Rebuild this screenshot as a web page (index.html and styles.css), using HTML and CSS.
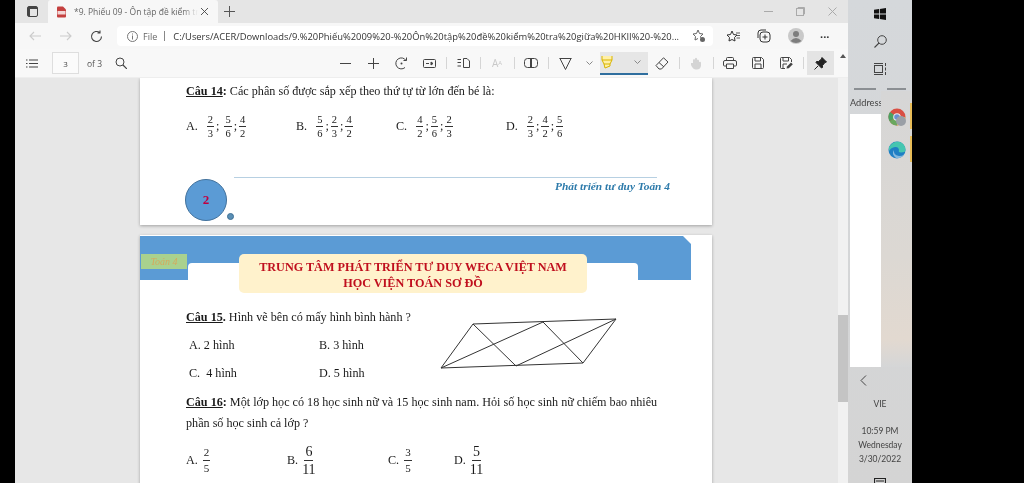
FILE: index.html
```html
<!DOCTYPE html>
<html lang="vi">
<head>
<meta charset="utf-8">
<title>PDF</title>
<link rel="stylesheet" href="styles.css">
</head>
<body>
<div class="screen">
  <div class="gutter"></div>
  <main class="browser">
    <div class="tabstrip">
      <svg class="ic win-ic" width="11" height="11" viewBox="0 0 11 11"><rect x=".5" y=".5" width="10" height="10" rx="1.5" fill="none" stroke="#444"/><rect x="1" y="1" width="9" height="2" fill="#444"/><rect x="1" y="3" width="2" height="7" fill="#444"/></svg>
      <div class="tab">
        <svg width="11" height="12" viewBox="0 0 11 12"><path d="M1 1.5Q1 .5 2 .5H7L10 3.5V10.500Q10 11.500 9 11.500H2Q1 11.500 1 10.500Z" fill="#c4403f"/><rect x="1.500" y="5" width="8" height="3.500" fill="#f3d6d6"/></svg>
        <span class="tab-title">*9. Phiếu 09 - Ôn tập đề kiểm tr</span>
        <svg width="9" height="9" viewBox="0 0 9 9"><path d="M1 1L8 8M8 1L1 8" stroke="#444" stroke-width=".9"/></svg>
      </div>
      <svg class="plus" width="11" height="11" viewBox="0 0 11 11"><path d="M5.500 0V11M0 5.500H11" stroke="#555" stroke-width="1"/></svg>
      <div class="winctl">
        <svg width="9" height="9" viewBox="0 0 9 9"><path d="M0 4.500H9" stroke="#aaa"/></svg>
        <svg width="9" height="9" viewBox="0 0 9 9"><rect x=".5" y="1.500" width="7" height="7" fill="none" stroke="#aaa"/><path d="M2 1V.5H8.500V7H8" fill="none" stroke="#aaa"/></svg>
        <svg width="9" height="9" viewBox="0 0 9 9"><path d="M.5 .5L8.500 8.500M8.500 .5L.5 8.500" stroke="#aaa"/></svg>
      </div>
    </div>

    <div class="addressrow">
      <svg class="nav-back" width="12" height="10" viewBox="0 0 12 10"><path d="M12 5H1M5 1L1 5L5 9" fill="none" stroke="#ccc" stroke-width="1.100"/></svg>
      <svg class="nav-fwd" width="12" height="10" viewBox="0 0 12 10"><path d="M0 5H11M7 1L11 5L7 9" fill="none" stroke="#ccc" stroke-width="1.100"/></svg>
      <svg class="nav-reload" width="13" height="13" viewBox="0 0 13 13"><path d="M11.500 6.500A5 5 0 1 1 9.800 2.700M10 .5V3H7.500" fill="none" stroke="#444" stroke-width="1.100"/></svg>
      <div class="omnibox">
        <svg width="11" height="11" viewBox="0 0 11 11"><circle cx="5.500" cy="5.500" r="5" fill="none" stroke="#777"/><path d="M5.500 4.500V8.500M5.500 2.500V3.500" stroke="#777"/></svg>
        <span class="scheme">File</span>
        <span class="sep-bar"></span>
        <span class="url">C:/Users/ACER/Downloads/9.%20Phiếu%2009%20-%20Ôn%20tập%20đề%20kiểm%20tra%20giữa%20HKII%20-%20...</span>
        <svg class="fav" width="14" height="14" viewBox="0 0 14 14"><path d="M6 1L7.500 4.500L11 5L8.500 7.500L9 9M6 1L4.500 4.500L1 5L3.500 7.500L3 11L6 9.500" fill="none" stroke="#666"/><circle cx="10.500" cy="10.500" r="2.500" fill="#666"/></svg>
      </div>
      <div class="browser-tools">
        <svg width="14" height="13" viewBox="0 0 14 13"><path d="M6 1L7.500 4.500L11 5L8.500 7.500L9 11L6 9.500L3 11L3.500 7.500L1 5L4.500 4.500Z" fill="none" stroke="#333"/><path d="M10 3H14M11 5.500H14M10.500 8H14" stroke="#333" stroke-width=".8"/></svg>
        <svg width="14" height="14" viewBox="0 0 14 14"><rect x="3" y="3" width="10" height="10" rx="3" fill="none" stroke="#333"/><path d="M1 9V4Q1 1 4 1H9M8 5.500V10.500M5.500 8H10.500" fill="none" stroke="#333"/></svg>
        <svg width="16" height="16" viewBox="0 0 16 16"><circle cx="8" cy="8" r="8" fill="#c9c9c9"/><circle cx="8" cy="6" r="3" fill="#7d7d7d"/><path d="M2.500 13Q8 7 13.500 13Q8 17 2.500 13Z" fill="#7d7d7d"/></svg>
        <span class="dots">···</span>
      </div>
    </div>

    <div class="pdfbar">
      <svg class="list-ic" width="12" height="9" viewBox="0 0 12 9"><path d="M3 1H12M3 4.500H12M3 8H12M0 1H1.500M0 4.500H1.500M0 8H1.500" stroke="#444"/></svg>
      <div class="pagebox">3</div>
      <span class="pageof">of 3</span>
      <svg class="find" width="12" height="12" viewBox="0 0 12 12"><circle cx="5" cy="5" r="4" fill="none" stroke="#444"/><path d="M8 8L12 12" stroke="#444" stroke-width="1.200"/></svg>
      <div class="tools">
        <span class="cell"><svg width="11" height="11" viewBox="0 0 11 11"><path d="M0 5.500H11" stroke="#444"/></svg></span>
        <span class="cell"><svg width="11" height="11" viewBox="0 0 11 11"><path d="M0 5.500H11M5.500 0V11" stroke="#444"/></svg></span>
        <span class="cell"><svg width="13" height="13" viewBox="0 0 13 13"><path d="M11 3.500A5.500 5.500 0 1 0 10 10.500M11.500 .5V3.500H8.500" fill="none" stroke="#444"/><circle cx="6.500" cy="6.500" r="1" fill="#444"/></svg></span>
        <span class="cell"><svg width="13" height="9" viewBox="0 0 13 9"><rect x=".5" y=".5" width="12" height="8" rx="1" fill="none" stroke="#444"/><path d="M3 4.500H6M8 3V6L10 4.500Z" stroke="#444" fill="#444"/></svg></span>
        <span class="divider"></span>
        <span class="cell"><svg width="13" height="10" viewBox="0 0 13 10"><path d="M.5 1.500H4M.5 4.500H4M.5 8H4M6.500 .5H10L12.500 3V9.500H6.500Z" fill="none" stroke="#444"/></svg></span>
        <span class="divider"></span>
        <span class="cell faded">A<sup>A</sup></span>
        <span class="divider"></span>
        <span class="cell"><svg width="14" height="10" viewBox="0 0 14 10"><rect x=".5" y=".5" width="13" height="9" rx="3" fill="none" stroke="#444"/><path d="M7 .5V9.500" stroke="#444" stroke-width="2"/></svg></span>
        <span class="divider"></span>
        <span class="cell"><svg width="13" height="13" viewBox="0 0 13 13"><path d="M.5 1.500H12.500M1 1.500L6.500 12.500L12 1.500" fill="none" stroke="#444"/></svg></span>
        <span class="cell chev"><svg width="7" height="4" viewBox="0 0 7 4"><path d="M.5 .5L3.500 3.500L6.500 .5" fill="none" stroke="#888"/></svg></span>
        <span class="hl">
          <svg width="14" height="14" viewBox="0 0 14 14"><path d="M2 1V5H12V1M2 5L4 9H10L12 5M4 9L5 13L10 11V9" fill="#fff0a8" stroke="#d8b400"/></svg>
          <svg width="7" height="4" viewBox="0 0 7 4"><path d="M.5 .5L3.500 3.500L6.500 .5" fill="none" stroke="#888"/></svg>
        </span>
        <span class="cell"><svg width="14" height="13" viewBox="0 0 14 13"><path d="M8.500 .8L13 5L6.500 12H4L1 8.500ZM4 5.500L9 10" fill="none" stroke="#444"/></svg></span>
        <span class="divider"></span>
        <span class="cell"><svg width="12" height="13" viewBox="0 0 12 13"><path d="M3 6V3Q4 1 5 3V1.500Q6 0 7 1.500V3Q8 2 9 3.500V5Q11 4 11 6V9Q10 13 6 12.500Q3 12.500 1 8V6Z" fill="#d4d4d4"/></svg></span>
        <span class="divider"></span>
        <span class="cell"><svg width="14" height="12" viewBox="0 0 14 12"><path d="M3.500 3.500V1.500Q3.500 .5 4.500 .5H9.500Q10.500 .5 10.500 1.500V3.500M3 9H1.500Q.5 9 .5 8V5Q.5 3.500 2 3.500H12Q13.500 3.500 13.500 5V8Q13.500 9 12.500 9H11M3.500 7H10.500V11.500H3.500Z" fill="none" stroke="#444"/></svg></span>
        <span class="cell"><svg width="12" height="12" viewBox="0 0 12 12"><path d="M.5 1.500Q.5 .5 1.500 .5H9.500L11.500 2.500V10.500Q11.500 11.500 10.500 11.500H1.500Q.5 11.500 .5 10.500ZM3 .5V4H8.500V.5M3 11.500V7H9V11.500" fill="none" stroke="#444"/></svg></span>
        <span class="cell"><svg width="13" height="12" viewBox="0 0 13 12"><path d="M.5 1.500Q.5 .5 1.500 .5H9.500L11.500 2.500V5M5 11.500H1.500Q.5 11.500 .5 10.500V1.500M3 .5V4H8.500V.5M3 11V7H7" fill="none" stroke="#444"/><path d="M6.500 11.500L7 9.500L11 5.500L12.800 7.300L8.800 11.300Z" fill="#444"/></svg></span>
        <span class="divider"></span>
        <span class="pin"><svg width="13" height="13" viewBox="0 0 13 13"><path d="M8 .5L12.500 5L11 5.500L8.500 8.500L8.500 10.500L7.500 11L2 5.500L2.500 4.500L4.500 4.500L7.500 2Z M4 9L.5 12.500" fill="#222" stroke="#222"/></svg></span>
      </div>
      <svg class="up-arrow" width="6" height="4" viewBox="0 0 6 4"><path d="M3 0L6 4H0Z" fill="#555"/></svg>
    </div>

    <div class="viewer">
      <div class="doc">
        <section class="page page-one">
          <p class="q"><b class="lead">Câu 14</b><b>:</b> Các phân số được sắp xếp theo thứ tự từ lớn đến bé là:</p>
          <div class="fracrow">
            <div class="opt opt-a">A.<span class="frac first"><i>2</i><i>3</i></span>;<span class="frac wide"><i>5</i><i>6</i></span>;<span class="frac"><i>4</i><i>2</i></span></div>
            <div class="opt opt-b">B.<span class="frac first"><i>5</i><i>6</i></span>;<span class="frac"><i>2</i><i>3</i></span>;<span class="frac"><i>4</i><i>2</i></span></div>
            <div class="opt opt-c">C.<span class="frac first"><i>4</i><i>2</i></span>;<span class="frac"><i>5</i><i>6</i></span>;<span class="frac"><i>2</i><i>3</i></span></div>
            <div class="opt">D.<span class="frac first"><i>2</i><i>3</i></span>;<span class="frac"><i>4</i><i>2</i></span>;<span class="frac"><i>5</i><i>6</i></span></div>
          </div>
          <footer class="pfoot">
            <div class="pnum">2</div>
            <div class="pdot"></div>
            <div class="pline">
              <div class="rule"></div>
              <div class="slogan">Phát triển tư duy Toán 4</div>
            </div>
          </footer>
        </section>

        <section class="page page-two">
          <div class="banner">
            <div class="toan">Toán 4</div>
            <div class="notch"></div>
            <div class="title">TRUNG TÂM PHÁT TRIỂN TƯ DUY WECA VIỆT NAM<br>HỌC VIỆN TOÁN SƠ ĐỒ</div>
          </div>
          <div class="q15">
            <div class="q15-text">
              <p class="q"><b class="lead">Câu 15</b><b>.</b> Hình vẽ bên có mấy hình bình hành ?</p>
              <div class="ans2"><span>A. 2 hình</span><span>B. 3 hình</span><span>C.&nbsp; 4 hình</span><span>D. 5 hình</span></div>
            </div>
            <svg class="para" width="180" height="52" viewBox="0 0 180 52"><path d="M33 6L176 1L143 45L1 50ZM33 6L76 48M103 4L143 45M1 50L103 4M76 48L176 1" fill="none" stroke="#333" stroke-width="1"/></svg>
          </div>
          <p class="q q16"><b class="lead">Câu 16</b><b>:</b> Một lớp học có 18 học sinh nữ và 15 học sinh nam. Hỏi số học sinh nữ chiếm bao nhiêu phần số học sinh cả lớp ?</p>
          <div class="fracrow r16">
            <div class="o16 o16-a">A.<span class="frac"><i>2</i><i>5</i></span></div>
            <div class="o16 o16-b">B.<span class="frac big"><i>6</i><i>11</i></span></div>
            <div class="o16 o16-c">C.<span class="frac"><i>3</i><i>5</i></span></div>
            <div class="o16">D.<span class="frac big"><i>5</i><i>11</i></span></div>
          </div>
        </section>
      </div>
      <div class="scrollbar"><div class="thumb"></div></div>
    </div>
  </main>

  <aside class="taskbar">
    <div class="tb-top">
      <svg width="12" height="12" viewBox="0 0 12 12"><path d="M0 1.800L5 1V5.600H0ZM5.800 .9L12 0V5.600H5.800ZM0 6.400H5V11L0 10.200ZM5.800 6.400H12V12L5.800 11.100Z" fill="#111"/></svg>
      <svg width="13" height="13" viewBox="0 0 13 13"><circle cx="8" cy="5" r="4.300" fill="none" stroke="#444"/><path d="M5 8L.5 12.500" stroke="#444" stroke-width="1.100"/></svg>
      <svg width="13" height="12" viewBox="0 0 13 12"><rect x=".5" y="2.500" width="8" height="7" fill="none" stroke="#444"/><path d="M0 .5H9M0 11.500H9M11.500 0V3M11.500 4.500V7.500M11.500 9V12" stroke="#444"/></svg>
    </div>
    <div class="grips"><span class="g1"></span><span class="g2"></span></div>
    <div class="tb-mid">
      <div class="addrcol">
        <div class="addrlabel">Address</div>
        <div class="addrinput"></div>
      </div>
      <div class="apps">
        <div class="app">
          <svg width="18" height="18" viewBox="0 0 18 18"><circle cx="9" cy="9" r="8.500" fill="#d94f43"/><path d="M9 9L1.600 13.200A8.500 8.500 0 0 1 2 4Z" fill="#4ba261"/><path d="M9 9L9 17.500A8.500 8.500 0 0 1 1.600 13.200Z" fill="#6aa85f"/><path d="M9 9H17.500A8.500 8.500 0 0 1 9 17.500Z" fill="#e1c45a"/><circle cx="9" cy="9" r="3.800" fill="#eee"/><circle cx="9" cy="9" r="2.800" fill="#6a8fd1"/><circle cx="13" cy="13" r="5" fill="#9a9fa6"/></svg>
        </div>
        <div class="app">
          <svg width="18" height="18" viewBox="0 0 18 18"><circle cx="9" cy="9" r="8.500" fill="#1f7fc4"/><path d="M1 6Q5 0 11 .8Q17 2 17.500 9Q17.500 11.500 13 11.500Q10 11.500 11 9Q10.500 5.500 7 6Q3 6.500 1 10Z" fill="#46c6b0"/><path d="M8 17Q3 13 6 9Q5 14 11 15Q14 15 16 13.500Q12.500 18 8 17Z" fill="#fff" opacity=".45"/></svg>
        </div>
      </div>
    </div>
    <svg class="caret" width="7" height="11" viewBox="0 0 7 11"><path d="M6 .5L1 5.500L6 10.500" fill="none" stroke="#444"/></svg>
    <div class="lang">VIE</div>
    <div class="clock">10:59 PM<br>Wednesday<br>3/30/2022</div>
    <svg class="notif" width="12" height="10" viewBox="0 0 12 10"><path d="M.5 .5H11.500V10H.5ZM2 3H10M2 5.500H10" fill="none" stroke="#222" stroke-width="1.200"/></svg>
  </aside>
</div>
</body>
</html>
```

FILE: styles.css
```css
* { box-sizing: border-box; }
html, body { margin: 0; height: 100%; background: #000; overflow: hidden; }
.screen { display: flex; width: 912px; height: 483px; overflow: hidden; }
.gutter { width: 15px; flex: none; }

.browser { width: 833px; flex: none; display: flex; flex-direction: column; font-family: "Open Sans", "Noto Sans", sans-serif; color: #444; background: #e7e7e7; filter: blur(.35px); }
.tabstrip { height: 23px; flex: none; display: flex; align-items: center; background: #e5e5e5; }
.win-ic { margin-left: 12px; }
.tab { margin-left: 10px; width: 170px; height: 23px; background: #f7f7f7; display: flex; align-items: center; padding-left: 8px; border-radius: 3px 3px 0 0; }
.tab-title { margin-left: 7px; width: 124px; font-size: 8.500px; color: #666; white-space: nowrap; -webkit-mask-image: linear-gradient(90deg, #000 88%, transparent 100%); mask-image: linear-gradient(90deg, #000 88%, transparent 100%); }
.tab svg:last-child { margin-left: 2px; }
.plus { margin-left: 6px; }
.winctl { margin-left: auto; margin-right: 11px; display: flex; gap: 23px; }

.addressrow { height: 26px; flex: none; display: flex; align-items: center; background: #f7f7f7; }
.nav-back { margin-left: 14px; }
.nav-fwd { margin-left: 19px; }
.nav-reload { margin-left: 18px; }
.omnibox { margin-left: 14px; width: 596px; height: 20px; background: #fff; border-radius: 4px; display: flex; align-items: center; padding-left: 10px; }
.scheme { margin-left: 5px; font-size: 9px; color: #666; }
.sep-bar { margin-left: 7px; width: 1px; height: 10px; background: #888; }
.url { margin-left: 8px; width: 518px; font-size: 9.400px; color: #333; white-space: nowrap; }
.fav { margin-left: 1px; }
.browser-tools { margin-left: 13px; display: flex; align-items: center; }
.browser-tools svg:nth-child(2) { margin-left: 17px; }
.browser-tools svg:nth-child(3) { margin-left: 17px; }
.dots { margin-left: 16px; font-size: 11px; font-weight: 700; color: #333; }

.pdfbar { height: 29px; flex: none; display: flex; align-items: center; background: #f8f8f8; border-bottom: 1px solid #eee; }
.list-ic { margin-left: 11px; }
.pagebox { margin-left: 14px; width: 27px; height: 22px; border: 1px solid #dedede; background: #fbfbfb; font-size: 8px; display: flex; align-items: center; justify-content: center; }
.pageof { margin-left: 8px; font-size: 8.500px; color: #555; width: 20px; }
.find { margin-left: 8px; }
.tools { margin-left: 204px; display: flex; align-items: center; height: 24px; }
.cell { width: 28px; height: 22px; display: flex; align-items: center; justify-content: center; }
.chev { width: 21px; }
.faded { color: #c8c8c8; font-size: 10px; }
.faded sup { font-size: 6px; line-height: 1; }
.divider { width: 6px; height: 12px; display: flex; justify-content: center; }
.divider::before { content: ""; width: 1px; height: 12px; background: #d5d5d5; }
.hl { width: 48px; height: 23px; padding-right: 7px; display: flex; align-items: center; justify-content: space-between; background: #e6e6e6; border-bottom: 2px solid #2f6e9e; }
.pin { margin-left: 1px; width: 27px; height: 24px; background: #e4e4e4; display: flex; align-items: center; justify-content: center; }
.up-arrow { margin-left: 6px; margin-top: -14px; }

.viewer { flex: 1; display: flex; min-height: 0; }
.doc { flex: 1; padding-left: 125px; overflow: hidden; }
.scrollbar { width: 10px; flex: none; background: #f1f1f1; padding-top: 237px; }
.thumb { height: 87px; background: #c4c4c4; }

.page { width: 572px; background: #fff; font-family: "Liberation Serif", serif; font-size: 12.150px; color: #1a1a1a; box-shadow: 0 1px 3px rgba(0,0,0,.3); }
.page-one { height: 147px; padding: 5px 0 0 46px; margin-bottom: 10px; }
.q { margin: 0; line-height: 16px; }
.lead { text-decoration: underline; }
.fracrow { display: flex; align-items: center; }
.page-one .fracrow { margin-top: 13px; height: 28px; }
.opt { display: flex; align-items: center; }
.opt-a { width: 110px; }
.opt-b { width: 100px; }
.opt-c { width: 110px; }
.frac { display: inline-flex; flex-direction: column; align-items: center; margin: 0 2px; font-size: 10.500px; line-height: 13px; }
.frac.first { margin-left: 9px; }
.frac.wide { margin-left: 5px; }
.frac i { font-style: normal; padding: 0 1px; }
.frac i:first-child { border-bottom: 1px solid #333; }

.pfoot { display: flex; margin-top: 39px; margin-left: -1px; }
.pnum { width: 42px; height: 42px; border-radius: 50%; flex: none; background: #5b9bd5; border: 1px solid #41719c; color: #c00040; font-weight: 700; font-size: 13px; display: flex; align-items: center; justify-content: center; }
.pdot { width: 7px; height: 7px; margin-top: 34px; border-radius: 50%; flex: none; background: #5a8fb5; border: 1px solid #3e6f95; }
.pline { margin-top: -2px; width: 437px; }
.rule { height: 1px; background: #b7d0e2; width: 423px; }
.slogan { margin-top: 2px; padding-right: 1px; text-align: right; font-weight: 700; font-style: italic; font-size: 11.400px; color: #2e7bab; }

.page-two { padding-top: 1px; height: 260px; }
.banner { position: relative; height: 58px; width: 551px; }
.banner::before { content: ""; position: absolute; left: 0; top: 0; width: 551px; height: 44px; background: #5b9bd5; clip-path: polygon(0 0, 543px 0, 551px 8px, 551px 44px, 0 44px); }
.toan { position: absolute; left: 1px; top: 18px; width: 46px; height: 15px; background: #a9d18e; color: #d6a95c; font-style: italic; font-size: 10px; line-height: 15px; text-align: center; }
.notch { position: absolute; left: 48px; top: 27px; width: 450px; height: 31px; background: #fff; border-radius: 4px 4px 0 0; }
.title { position: absolute; left: 99px; top: 18px; width: 348px; height: 39px; background: #fff2cc; border-radius: 5px; color: #c00f1e; font-weight: 700; font-size: 12.200px; line-height: 16px; text-align: center; padding-top: 5px; }
.q15 { display: flex; padding: 15px 0 0 46px; }
.q15-text { width: 254px; }
.ans2 { display: grid; grid-template-columns: 130px 100px; row-gap: 12px; margin-top: 12px; padding-left: 3px; line-height: 16px; }
.para { margin-top: 9px; flex: none; }
.q16 { margin: 11px 40px 0 46px; line-height: 21px; }
.r16 { margin: 11px 0 0 46px; height: 30px; }
.r16 .frac { margin-left: 2px; line-height: 15px; font-size: 11px; }
.o16 { display: flex; align-items: center; gap: 3px; }
.o16-a { width: 101px; }
.o16-b { width: 101px; }
.o16-c { width: 66px; }
.r16 .frac.big { margin-left: 0; font-size: 14px; line-height: 17px; }

.taskbar { width: 64px; height: 483px; overflow: hidden; flex: none; display: flex; flex-direction: column; align-items: stretch; background: linear-gradient(#d5d8db, #d4d4d4); font-family: "Lato", "Open Sans", sans-serif; color: #444; filter: blur(.35px); }
.taskbar > * { flex: none; }
.tb-top { display: flex; flex-direction: column; align-items: center; gap: 15px; padding-top: 8px; height: 88px; }
.grips { display: flex; height: 3px; padding-left: 6px; }
.g1, .g2 { height: 2px; background: #8b8f93; }
.g1 { width: 22px; }
.g2 { width: 19px; margin-left: 11px; }
.tb-mid { display: flex; height: 276px; }
.addrcol { width: 33px; padding-left: 2px; }
.addrlabel { height: 23px; font-size: 9.200px; line-height: 24px; white-space: nowrap; }
.addrinput { width: 31px; height: 253px; background: #fff; }
.apps { flex: 1; padding: 17px 0 0 7px; background: linear-gradient(#d6d6d6 0, #dcd8d3 60%, #e2d9d0 90%, #d5d6d7 100%); display: flex; flex-direction: column; gap: 15px; }
.app { height: 18px; position: relative; }
.app::after { content: ""; position: absolute; left: 22px; top: -5px; width: 2px; height: 26px; background: #e8bd58; }
.caret { margin: 8px 0 0 12px; }
.lang { margin-top: 12px; text-align: center; font-size: 8.500px; line-height: 12px; }
.clock { margin-top: 14px; text-align: center; font-size: 8.500px; line-height: 14px; }
.notif { margin: 12px 0 0 26px; }
```
